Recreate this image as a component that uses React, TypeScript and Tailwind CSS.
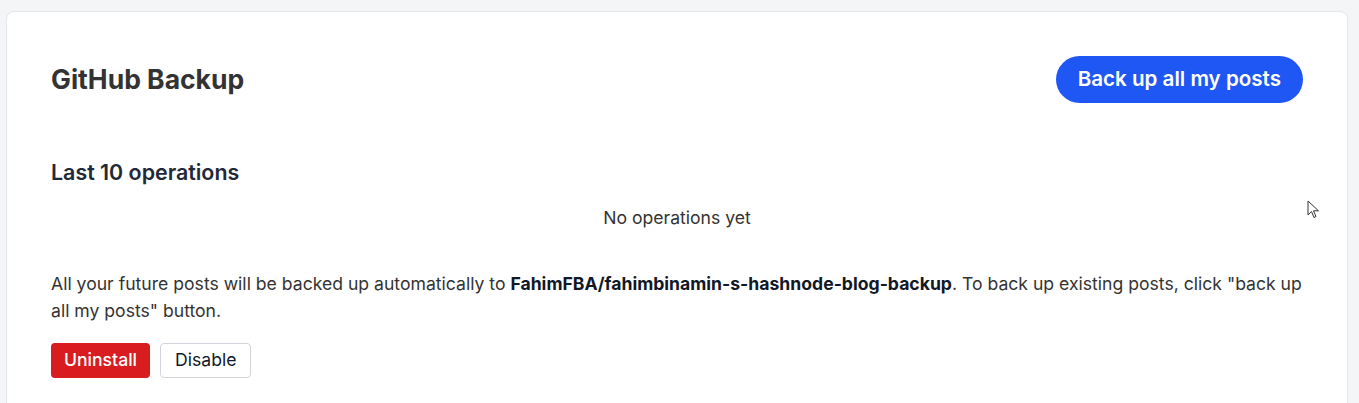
export default function App() {
  return (
    <div
      className="min-h-screen bg-[#f4f5f7] pl-[6px] pr-[11px] pt-[11px]"
      style={{ fontFamily: "Inter, 'Noto Sans', sans-serif" }}
    >
      <div className="relative rounded-lg border border-[#e5e7eb] bg-white px-11 pt-11 pb-12 text-[#333333]">
        <div className="flex items-center justify-between">
          <h1 className="text-[26.5px] font-bold text-[#333333]">GitHub Backup</h1>
          <button className="h-[47px] rounded-full bg-[#1f57f5] px-[22px] text-[20.6px] font-semibold text-white">
            Back up all my posts
          </button>
        </div>

        <h2 className="mt-[53px] text-[21.4px] font-semibold text-[#1f2937]">Last 10 operations</h2>
        <p className="mt-[17px] text-center text-[17.6px] text-[#333333]">No operations yet</p>

        <p className="mt-[38px] text-[17.6px] leading-[27px] text-[#333333]">
          All your future posts will be backed up automatically to{" "}
          <strong className="font-bold text-[#111827]">FahimFBA/fahimbinamin-s-hashnode-blog-backup</strong>. To back
          up existing posts, click "back up all my posts" button.
        </p>

        <div className="mt-[19px] flex gap-[10px]">
          <button className="h-[35px] rounded bg-[#d91c1f] px-[13px] text-[17.6px] font-medium text-white">
            Uninstall
          </button>
          <button className="h-[35px] rounded border border-[#d1d5db] bg-white px-[14px] text-[17.6px] text-[#111827]">
            Disable
          </button>
        </div>

        <svg
          className="absolute left-[1300px] top-[188px]"
          width="13"
          height="20"
          viewBox="0 0 13 20"
          fill="white"
          stroke="#333"
          strokeWidth="1"
        >
          <path d="M1 1 L1 15 L4.5 11.5 L7 17.5 L9 16.6 L6.5 10.8 L11.5 10.8 Z" />
        </svg>
      </div>
    </div>
  );
}
